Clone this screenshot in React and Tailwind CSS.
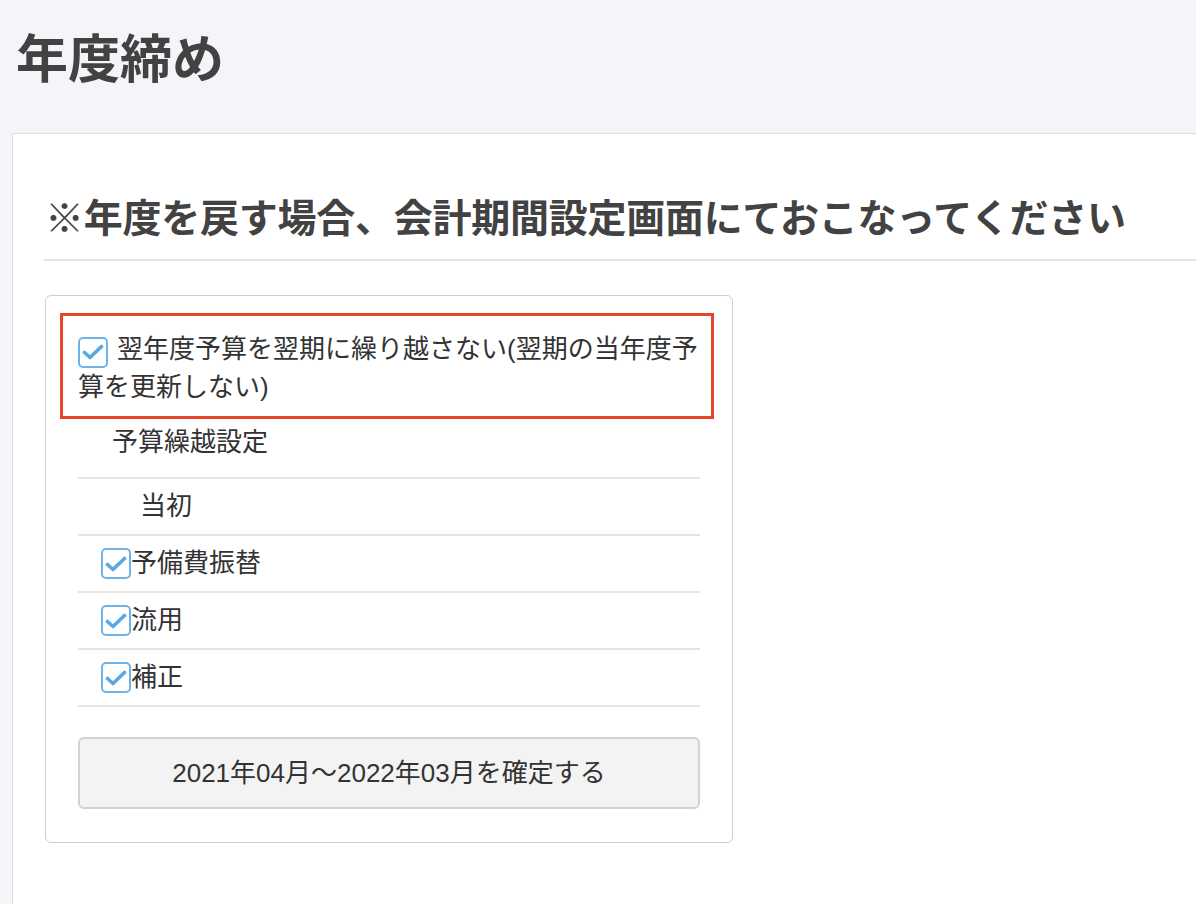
import React from "react";

function CheckBox({ className = "" }) {
  return (
    <span
      className={`inline-flex shrink-0 items-center justify-center w-[30px] h-[31px] rounded-[5px] border-2 border-[#6fb3e8] bg-white ${className}`}
    >
      <svg width="22" height="18" viewBox="0 0 22 18" fill="none">
        <path
          d="M2.5 9.5 L8 14.5 L19.5 3.5"
          stroke="#58a8e2"
          strokeWidth="3.6"
          strokeLinecap="round"
          strokeLinejoin="round"
        />
      </svg>
    </span>
  );
}

function CheckRow({ label }) {
  return (
    <div className="flex items-center h-[57px] border-b-2 border-[#e5e5e5] pl-[23px]">
      <CheckBox />
      <span>{label}</span>
    </div>
  );
}

export default function App() {
  return (
    <div
      className="min-h-[904px] bg-[#f4f5f9] text-[#333]"
      style={{ fontFamily: '"Liberation Sans", "Noto Sans CJK JP", sans-serif' }}
    >
      <h1 className="pl-[16px] pt-[28px] pb-[41px] text-[52px] leading-[64px] font-bold text-[#424242]">
        年度締め
      </h1>

      <div className="ml-[12px] min-h-[771px] bg-white border-t border-l border-[#dcdcdc]">
        <div className="ml-[31px] pt-[57px] pb-[20px] border-b-2 border-[#e4e4e4]">
          <h2
            className="pl-[1px] text-[39px] leading-[48px] font-bold text-[#424242] whitespace-nowrap tracking-[-0.25px]"
            style={{ fontFamily: '"Noto Sans CJK JP", sans-serif' }}
          >
            ※年度を戻す場合、会計期間設定画面にておこなってください
          </h2>
        </div>

        <div className="ml-[32px] mt-[34px] w-[688px] border border-[#cfcfcf] rounded-[6px] px-[32px] pt-[17px] pb-[33px] text-[26px]">
          <div className="-ml-[18px] -mr-[14px] border-[3px] border-[#e8452c] pl-[15px] pt-[14px] pb-[10px] leading-[38px]">
            <CheckBox className="align-[-3px] mr-[9px]" />
            翌年度予算を翌期に繰り越さない(翌期の当年度予算を更新しない)
          </div>

          <div className="pl-[34px] pt-[4px] pb-[16px] leading-[38px] border-b-2 border-[#e5e5e5]">
            予算繰越設定
          </div>
          <div className="flex items-center h-[57px] border-b-2 border-[#e5e5e5] pl-[62px]">
            当初
          </div>
          <CheckRow label="予備費振替" />
          <CheckRow label="流用" />
          <CheckRow label="補正" />

          <button className="mt-[30px] w-full h-[72px] bg-[#f3f3f3] border-2 border-[#d2d2d2] rounded-[6px] text-[26px] text-[#333]">
            2021年04月～2022年03月を確定する
          </button>
        </div>
      </div>
    </div>
  );
}
